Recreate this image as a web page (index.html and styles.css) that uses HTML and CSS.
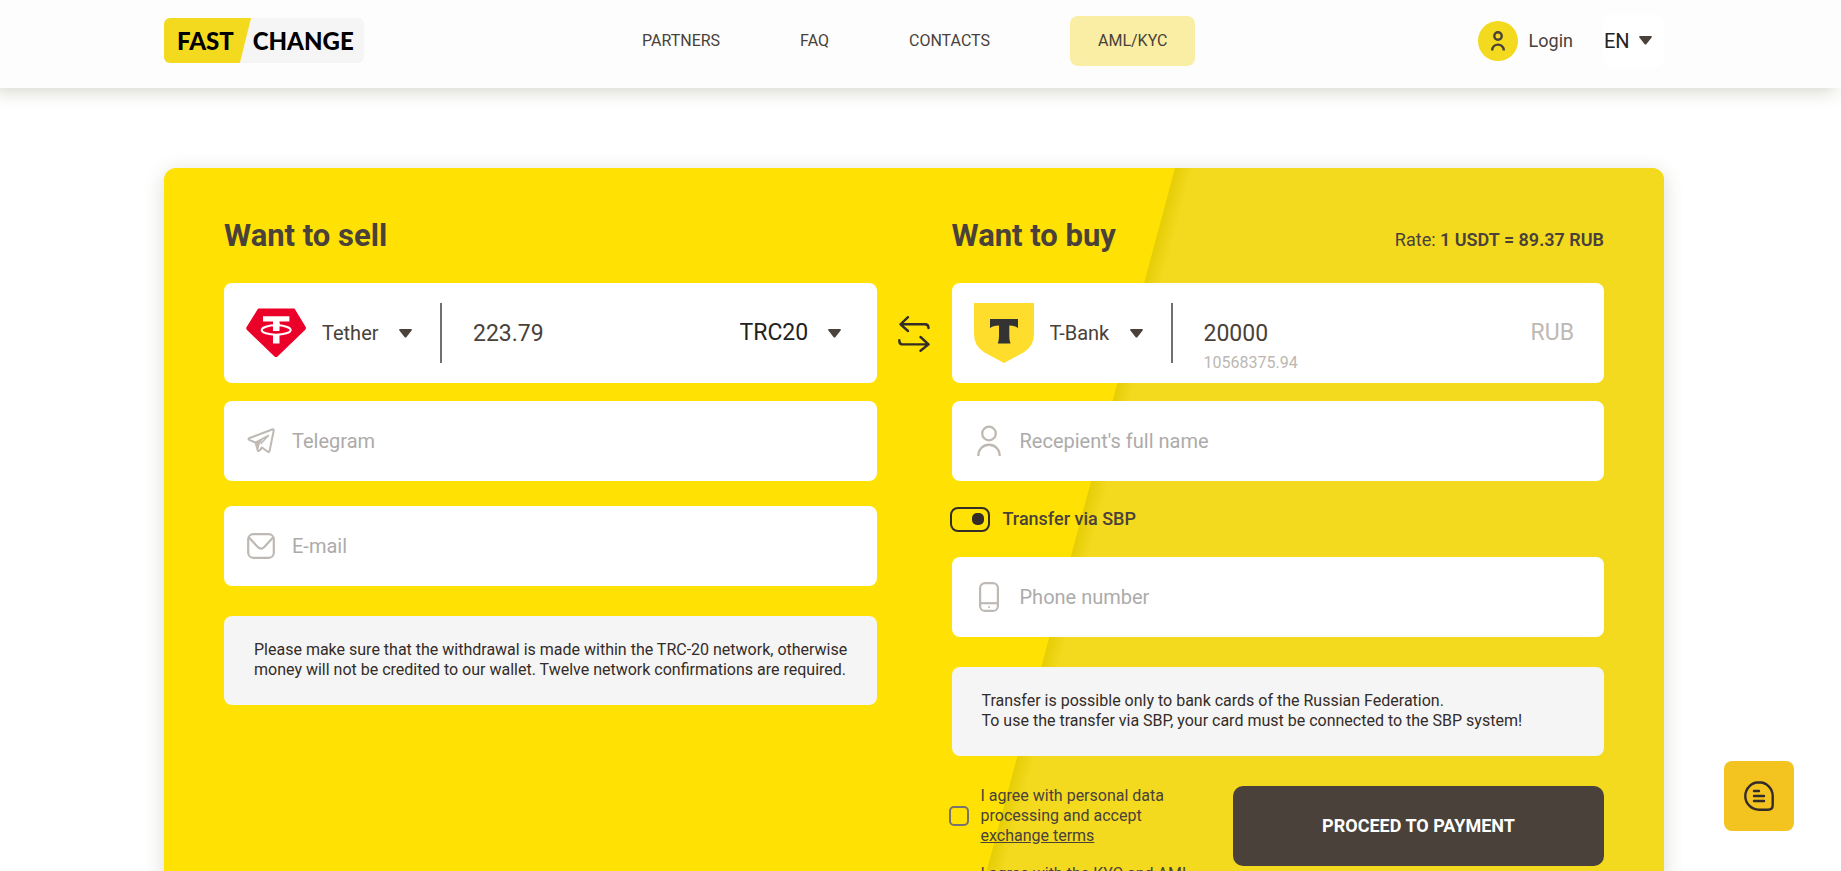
FILE: index.html
```
<!DOCTYPE html>
<html lang="en">
<head>
<meta charset="utf-8">
<meta name="viewport" content="width=device-width, initial-scale=1">
<title>Fast Change</title>
<link rel="stylesheet" href="styles.css">
</head>
<body>
<header class="header">
  <div class="header-row">
    <a class="logo" href="#"><span class="logo-fast">FAST</span><span class="logo-change">CHANGE</span></a>
    <nav class="nav">
      <a href="#">PARTNERS</a>
      <a href="#">FAQ</a>
      <a href="#">CONTACTS</a>
      <a class="nav-pill" href="#">AML/KYC</a>
    </nav>
    <div class="account">
      <a class="login" href="#">
        <span class="login-badge">
          <svg width="14" height="20" viewBox="0 0 14 20" fill="none" stroke="#49413a" stroke-width="2.4"><circle cx="7" cy="5" r="3.7"/><path d="M1.2 19.5C1.2 11.6 12.8 11.6 12.8 19.5"/></svg>
        </span>
        Login
      </a>
      <div class="lang">
        <select aria-label="Language"><option>EN</option></select>
        <svg class="caret" viewBox="0 0 13 9"><path d="M1 0H12Q13.400 .4 12.600 1.500L7.500 8Q6.500 9 5.500 8L.4 1.500Q-.4 .4 1 0Z"/></svg>
      </div>
    </div>
  </div>
</header>

<main>
  <form class="card">
    <section class="side">
      <div class="side-head"><h2>Want to sell</h2></div>
      <div class="box amount">
        <svg class="coin" viewBox="0 0 60 60"><path d="M12.500 5.500H48.500L60 24.500Q60 26 59 27L31.500 53.500Q30 54.500 28.500 53.500L1 27Q0 26 .3 24.500L11.500 6.500Q12 5.500 12.500 5.500Z" fill="#ea0029"/><path d="M17 13.200H43.400V18.500H33.500V22H27V18.500H17Z" fill="#fff"/><ellipse cx="30.200" cy="27" rx="14.500" ry="4.700" fill="none" stroke="#fff" stroke-width="2"/><path d="M27 20H33.500V28H27ZM27 32H33.500V40.600H27Z" fill="#fff"/></svg>
        <div class="currency">
          <select aria-label="Currency to sell"><option>Tether</option></select>
          <svg class="caret" viewBox="0 0 13 9"><path d="M1 0H12Q13.400 .4 12.600 1.500L7.500 8Q6.500 9 5.500 8L.4 1.500Q-.4 .4 1 0Z"/></svg>
        </div>
        <span class="divider"></span>
        <div class="sum"><input type="text" value="223.79" aria-label="Amount to sell"></div>
        <div class="network">
          <select aria-label="Network"><option>TRC20</option></select>
          <svg class="caret" viewBox="0 0 13 9"><path d="M1 0H12Q13.400 .4 12.600 1.500L7.500 8Q6.500 9 5.500 8L.4 1.500Q-.4 .4 1 0Z"/></svg>
        </div>
      </div>
      <label class="box field">
        <svg width="28" height="26" viewBox="0 0 28 26" fill="none" stroke="#bfb9b4" stroke-width="2" stroke-linejoin="round" stroke-linecap="round"><path d="M25.800 1.300L2 10.200Q1 11 2 11.800L8.500 14.500L10.800 22.600Q11.500 23.600 12.500 22.600L15 19.500L20.800 23.800Q22.300 24.300 22.600 22.800L26.800 2.300Q26.800 1.200 25.800 1.300Z"/><path d="M8.500 14.500L21.500 7.500L14 15.500" stroke-width="1.500"/><path d="M8.500 14.500L17 10L12.800 15.500L11.500 21Z" fill="#bfb9b4" stroke="none"/></svg>
        <input type="text" placeholder="Telegram" aria-label="Telegram">
      </label>
      <label class="box field email">
        <svg width="28" height="26" viewBox="0 0 28 26" fill="none" stroke="#bfb9b4" stroke-width="2.200" stroke-linecap="round"><rect x="1.200" y="1.200" width="25.600" height="23.600" rx="5"/><path d="M2 4.500L10.500 13.800Q14 17.500 17.500 13.800L26 4.500"/></svg>
        <input type="email" placeholder="E-mail" aria-label="E-mail">
      </label>
      <p class="note">Please make sure that the withdrawal is made within the TRC-20 network, otherwise<br>money will not be credited to our wallet. Twelve network confirmations are required.</p>
    </section>

    <button class="swap" type="button" aria-label="Swap currencies">
      <svg width="32" height="36" viewBox="0 0 32 36" fill="none" stroke="#332c28" stroke-width="2.400" stroke-linecap="round" stroke-linejoin="round"><path d="M10 1.200L2.500 8.300L10 15M2.500 8.300H27Q30.500 8.300 30.500 12"/><path d="M22.500 21L30.500 28.400L22.500 34.800M30.500 28.400H4Q1.300 28.400 1.300 24.300"/></svg>
    </button>

    <section class="side">
      <div class="side-head"><h2>Want to buy</h2><p class="rate">Rate: <b>1 USDT = 89.37 RUB</b></p></div>
      <div class="box amount">
        <svg class="coin" viewBox="0 0 60 60"><path d="M0 0H60V31Q60 43 49.500 49.500L30 60L10.500 49.500Q0 43 0 31Z" fill="#ffdd2d"/><path d="M16 16H44V25.200Q41.500 22.500 35.300 22.500V33Q35.300 38 36.500 40.600H23.800Q25 38 25 33V22.500Q18.500 22.500 16 25.200Z" fill="#333"/></svg>
        <div class="currency">
          <select aria-label="Currency to buy"><option>T-Bank</option></select>
          <svg class="caret" viewBox="0 0 13 9"><path d="M1 0H12Q13.400 .4 12.600 1.500L7.500 8Q6.500 9 5.500 8L.4 1.500Q-.4 .4 1 0Z"/></svg>
        </div>
        <span class="divider"></span>
        <div class="sum"><input type="text" value="20000" aria-label="Amount to buy"><span class="reserve">10568375.94</span></div>
        <span class="unit">RUB</span>
      </div>
      <label class="box field">
        <svg width="28" height="32" viewBox="0 0 28 32" fill="none" stroke="#bfb9b4" stroke-width="2.300"><circle cx="14" cy="8.500" r="6.800"/><path d="M3.300 31C3.300 16 24.700 16 24.700 31"/></svg>
        <input type="text" placeholder="Recepient's full name" aria-label="Recepient's full name">
      </label>
      <label class="sbp"><input type="checkbox" role="switch" checked>Transfer via SBP</label>
      <label class="box field">
        <svg width="28" height="30" viewBox="0 0 28 30" fill="none" stroke="#bfb9b4" stroke-width="2.200"><rect x="5.100" y="1.100" width="17.800" height="27.800" rx="5"/><path d="M5 21.200H23"/><circle cx="14" cy="25" r="1" fill="#bfb9b4" stroke="none"/></svg>
        <input type="tel" placeholder="Phone number" aria-label="Phone number">
      </label>
      <p class="note">Transfer is possible only to bank cards of the Russian Federation.<br>To use the transfer via SBP, your card must be connected to the SBP system!</p>
      <div class="finish">
        <div class="terms">
          <div class="agree"><input type="checkbox" id="terms"><label for="terms">I agree with personal data processing and accept <a href="#">exchange terms</a></label></div>
          <div class="agree"><input type="checkbox" id="aml"><label for="aml">I agree with the KYC and AML <a href="#">policy</a></label></div>
        </div>
        <button class="pay" type="submit">PROCEED TO PAYMENT</button>
      </div>
    </section>
  </form>
</main>

<button class="chat" type="button" aria-label="Open chat">
  <svg width="30" height="30" viewBox="0 0 30 30" fill="none" stroke="#332c28" stroke-width="2.400" stroke-linecap="round"><path d="M15 1.300C7.400 1.300 1.300 7.400 1.300 15S7.400 28.700 15 28.700H24Q28.700 28.700 28.700 24V15C28.700 7.400 22.600 1.300 15 1.300Z"/><path d="M10 10H15M10 15H20M10 20H20"/></svg>
</button>
</body>
</html>
```
FILE: styles.css
```
* { box-sizing: border-box; }

body {
  margin: 0;
  background: #fff;
  color: #49413a;
  font-family: Roboto, "Liberation Sans", sans-serif;
  font-size: 16px;
  line-height: 20px;
  overflow-x: hidden;
}

h2, p { margin: 0; }
a { color: inherit; text-decoration: none; }

input, select, button {
  font: inherit;
  color: inherit;
  border: 0;
  background: none;
  padding: 0;
  margin: 0;
}

select { appearance: none; cursor: pointer; }
button { cursor: pointer; }
.caret { width: 13px; height: 9px; fill: #49413a; flex: none; }

.header, main { padding-right: 13px; }

.header {
  background: #fdfdfd;
  box-shadow: -6px 4px 16px rgba(73, 77, 30, 0.22);
  margin-bottom: 80px;
}

.header-row, .card {
  max-width: 1500px;
  margin: 0 auto;
}

.header-row {
  display: flex;
  align-items: center;
  height: 88px;
  padding-bottom: 7px;
}

.logo {
  display: flex;
  align-items: center;
  width: 200px;
  height: 45px;
  padding-left: 13px;
  gap: 19px;
  border-radius: 6px;
  background: linear-gradient(104deg, #f4da1f 84px, #f5f5f5 85px);
  color: #000;
  font: 900 24px/28px Lato, sans-serif;
}

.nav {
  display: flex;
  align-items: center;
  gap: 80px;
  margin-left: 278px;
}

.nav-pill {
  padding: 15px 28px;
  border-radius: 8px;
  background: #f9eea4;
}

.account { display: flex; align-items: center; gap: 30px; margin-left: auto; }
.login { display: flex; align-items: center; gap: 11px; font-size: 18px; }

.login-badge {
  display: grid;
  place-items: center;
  width: 40px;
  height: 40px;
  border-radius: 50%;
  background: #f3da1f;
}

.lang {
  display: flex;
  align-items: center;
  gap: 9px;
  height: 52px;
  padding: 0 12px 0 1px;
  border-radius: 8px;
  background: #fff;
  font-size: 20px;
  color: #222;
}

.card {
  position: relative;
  overflow: hidden;
  display: grid;
  grid-template-columns: 1fr 75px 1fr;
  padding: 50px 60px 60px;
  border-radius: 12px;
  background: #ffe203;
  box-shadow: 0 4px 20px rgba(73, 77, 50, 0.2);
}

.card::before {
  content: "";
  position: absolute;
  top: 0;
  bottom: 0;
  left: 67.4%;
  width: 100%;
  background: linear-gradient(90deg, #e5cd07, #f3da1f 18px);
  transform: skewX(-15deg);
  transform-origin: top left;
}

.card > * { position: relative; }
.side { min-width: 0; }

.side-head {
  display: flex;
  align-items: center;
  justify-content: space-between;
  height: 36px;
  margin-bottom: 29px;
}

.side-head h2 { font-size: 31px; font-weight: 700; line-height: 36px; }
.rate { font-size: 18px; padding-top: 8px; }
.rate b { font-weight: 600; }

.box {
  display: flex;
  align-items: center;
  height: 80px;
  border-radius: 8px;
  background: #fff;
}

.amount { height: 100px; padding: 0 30px 0 22px; margin-bottom: 18px; }
.coin { width: 60px; height: 60px; flex: none; }

.currency {
  display: flex;
  align-items: center;
  gap: 20px;
  margin: 0 28px 0 16px;
  font-size: 20px;
}

.divider { width: 2px; height: 60px; background: #72706a; flex: none; }
.sum { position: relative; flex: 1; min-width: 0; padding-left: 31px; }
.sum input { width: 100%; height: 36px; font-size: 23px; }

.reserve {
  position: absolute;
  left: 31px;
  top: 38px;
  font-size: 16px;
  color: #bbb7b2;
}

.network {
  display: flex;
  align-items: center;
  gap: 19px;
  padding-right: 6px;
  font-size: 23px;
  color: #222;
}

.unit { font-size: 23px; color: #bfb9b4; }

.field { padding: 0 23px; gap: 17px; margin-bottom: 25px; }
.field svg { flex: none; }
.field input { flex: 1; min-width: 0; height: 40px; font-size: 20px; outline: 0; }
.field input::placeholder { color: #adabaa; opacity: 1; }
.email { margin-bottom: 30px; }

.note {
  padding: 24px 20px 25px 30px;
  border-radius: 8px;
  background: #f5f5f5;
  color: #332c28;
}

.swap { align-self: start; justify-self: center; margin-top: 98px; height: 36px; }

.sbp {
  display: flex;
  align-items: center;
  gap: 13px;
  height: 26px;
  margin: 0 0 25px -2px;
  font-size: 18px;
  font-weight: 500;
}

.sbp input {
  appearance: none;
  display: grid;
  align-items: center;
  justify-items: end;
  width: 40px;
  height: 25px;
  padding-right: 4px;
  border: 2px solid #332c28;
  border-radius: 8px;
}

.sbp input::before {
  content: "";
  width: 12px;
  height: 12px;
  border-radius: 5px;
  background: #332c28;
}

.sbp + .field { margin-bottom: 30px; }

.finish {
  display: flex;
  align-items: flex-start;
  justify-content: space-between;
  margin: 30px 0 0 -3px;
}

.terms { display: grid; gap: 18px; width: 250px; }
.agree { display: flex; align-items: center; gap: 12px; }
.agree a { text-decoration: underline; }

.agree input {
  appearance: none;
  flex: none;
  width: 20px;
  height: 20px;
  border: 2px solid #767270;
  border-radius: 5px;
}

.pay {
  width: 371px;
  height: 80px;
  border-radius: 10px;
  background: #49413a;
  color: #fff;
  font-size: 18px;
  font-weight: 700;
}

.chat {
  position: fixed;
  right: 47px;
  bottom: 40px;
  display: grid;
  place-items: center;
  width: 70px;
  height: 70px;
  border-radius: 8px;
  background: #f3c31f;
}
```
